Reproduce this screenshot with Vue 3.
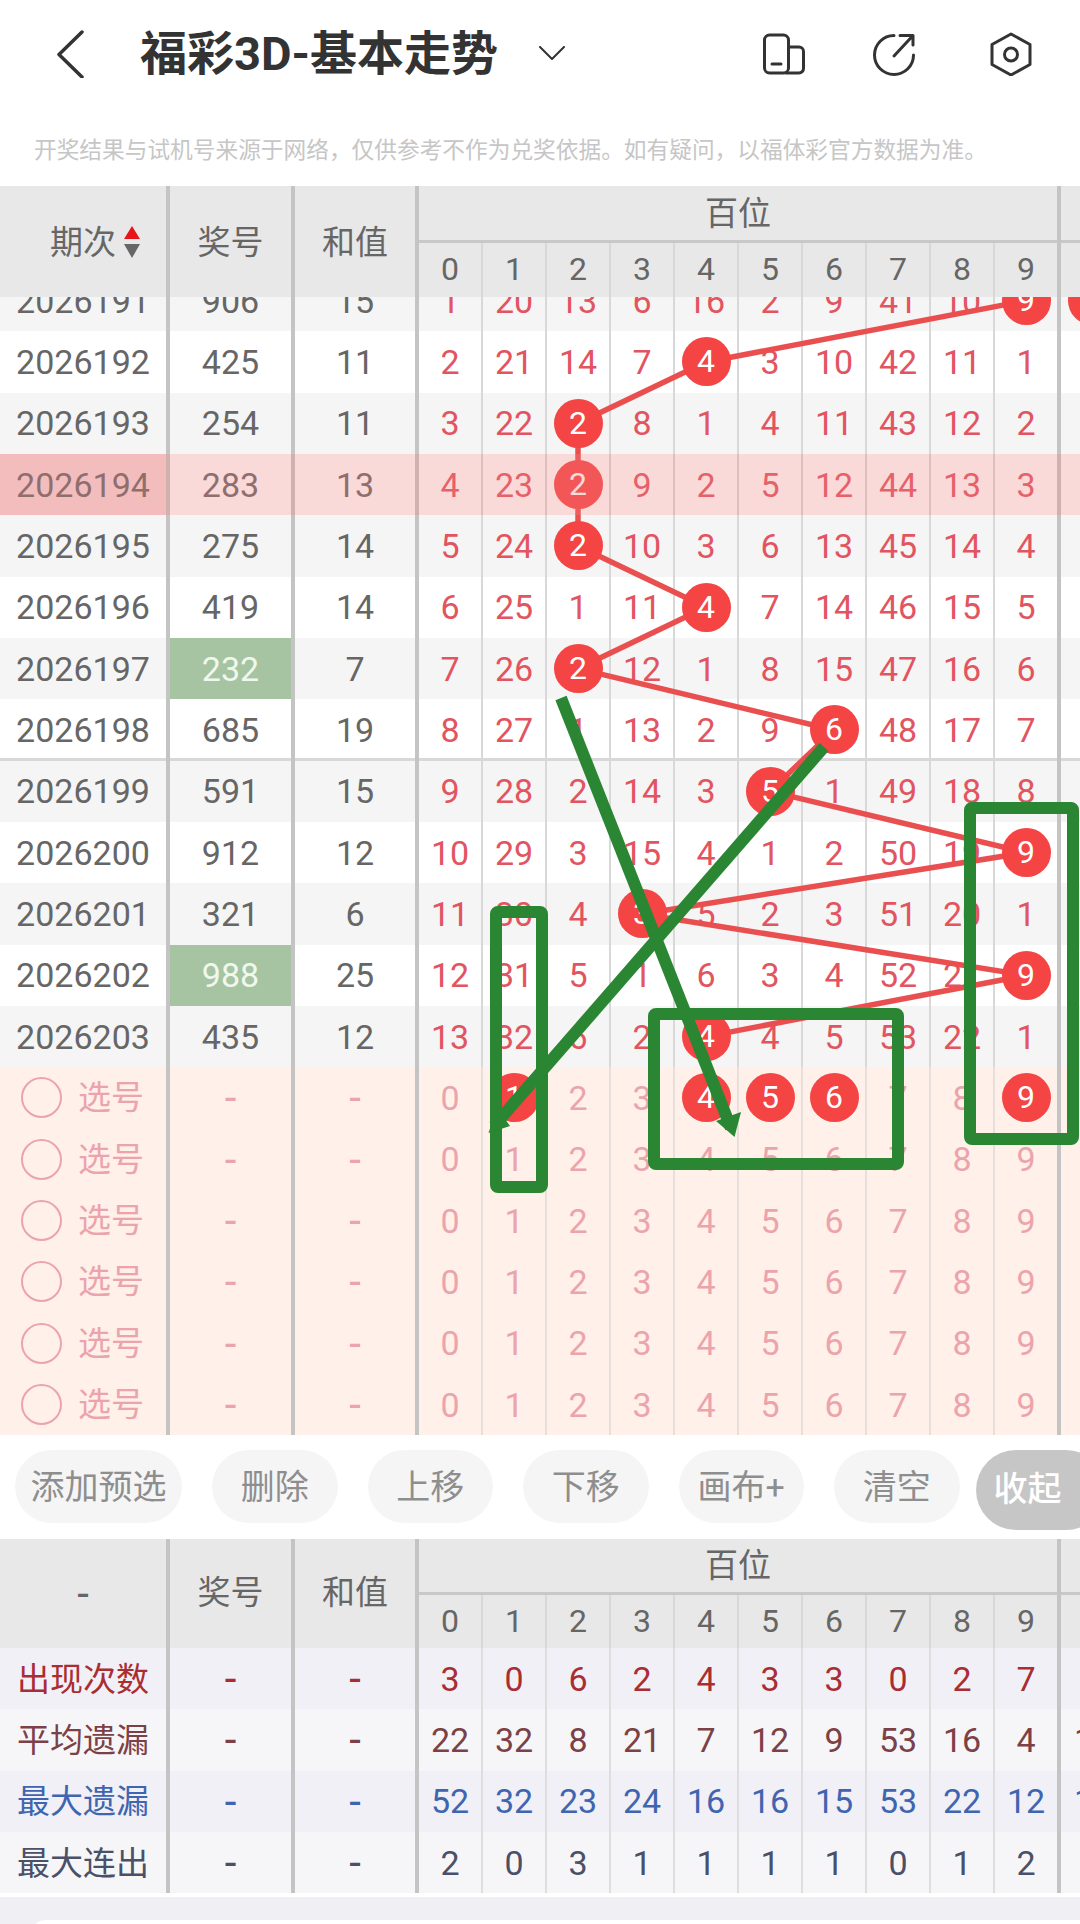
<script setup>
import { computed } from 'vue'

const ROW_H = 61.33
const FIRST_Y = 270
const digits = [0, 1, 2, 3, 4, 5, 6, 7, 8, 9]

const raw = [
  ['2026191', '906', '15', [1, 20, 13, 6, 16, 2, 9, 41, 10, 9, ''], [9, 10], 9],
  ['2026192', '425', '11', [2, 21, 14, 7, 4, 3, 10, 42, 11, 1, ''], [4], 4],
  ['2026193', '254', '11', [3, 22, 2, 8, 1, 4, 11, 43, 12, 2, ''], [2], 2],
  ['2026194', '283', '13', [4, 23, 2, 9, 2, 5, 12, 44, 13, 3, ''], [2], 2],
  ['2026195', '275', '14', [5, 24, 2, 10, 3, 6, 13, 45, 14, 4, ''], [2], 2],
  ['2026196', '419', '14', [6, 25, 1, 11, 4, 7, 14, 46, 15, 5, ''], [4], 4],
  ['2026197', '232', '7', [7, 26, 2, 12, 1, 8, 15, 47, 16, 6, ''], [2], 2],
  ['2026198', '685', '19', [8, 27, 1, 13, 2, 9, 6, 48, 17, 7, ''], [6], 6],
  ['2026199', '591', '15', [9, 28, 2, 14, 3, 5, 1, 49, 18, 8, ''], [5], 5],
  ['2026200', '912', '12', [10, 29, 3, 15, 4, 1, 2, 50, 19, 9, ''], [9], 9],
  ['2026201', '321', '6', [11, 30, 4, 3, 5, 2, 3, 51, 20, 1, ''], [3], 3],
  ['2026202', '988', '25', [12, 31, 5, 1, 6, 3, 4, 52, 21, 9, ''], [9], 9],
  ['2026203', '435', '12', [13, 32, 6, 2, 4, 4, 5, 53, 22, 1, ''], [4], 4]
]

const rows = raw.map(([period, num, sum, cells, balls, hit]) => ({
  period, num, sum, cells, balls, hit,
  odd: Number(period) % 2 === 1,
  green: num === '232' || num === '988',
  hl: period === '2026194',
  sep: period === '2026198'
}))

const picks = [[1, 4, 5, 6, 9], [], [], [], [], []]

const stats = [
  { label: '出现次数', cls: 's-red', vals: [3, 0, 6, 2, 4, 3, 3, 0, 2, 7, 3] },
  { label: '平均遗漏', cls: 's-brown', vals: [22, 32, 8, 21, 7, 12, 9, 53, 16, 4, 13] },
  { label: '最大遗漏', cls: 's-blue', vals: [52, 32, 23, 24, 16, 16, 15, 53, 22, 12, 14] },
  { label: '最大连出', cls: 's-ink', vals: [2, 0, 3, 1, 1, 1, 1, 0, 1, 2, 2] }
]

const tools = ['添加预选', '删除', '上移', '下移', '画布+', '清空']

const trend = computed(() =>
  rows.map((r, i) => `${450 + 64 * r.hit},${(FIRST_Y + ROW_H * (i + 0.5)).toFixed(1)}`).join(' ')
)
</script>

<template>
  <div class="page">
    <header class="bar">
      <svg class="back" viewBox="0 0 28 48" fill="none">
        <path d="M26 2 3 24.500 26 47" />
      </svg>
      <h1 class="title">福彩3D-基本走势</h1>
      <svg class="caret" viewBox="0 0 26 14" fill="none">
        <path d="M1 1 13 13 25 1" />
      </svg>
      <div class="icons">
        <svg class="ic" viewBox="0 0 44 44" fill="none">
          <rect x="2.500" y="3" width="24" height="38" rx="5" />
          <path d="M27 15h10a4.500 4.500 0 0 1 4.500 4.500V36.500a4.500 4.500 0 0 1-4.500 4.500H24" />
          <path d="M10 32h9" />
        </svg>
        <svg class="ic" viewBox="0 0 44 44" fill="none">
          <path d="M41.500 23A19.500 19.500 0 1 1 22 3.500" />
          <path d="M22 24 41 3.500M28 3.500h13V13" />
        </svg>
        <svg class="ic ic-last" viewBox="0 0 44 44" fill="none">
          <polygon points="22,2 41,12.500 41,32.500 22,43 3,32.500 3,12.500" />
          <circle cx="22" cy="22.500" r="6.500" />
        </svg>
      </div>
    </header>

    <p class="notice">开奖结果与试机号来源于网络，仅供参考不作为兑奖依据。如有疑问，以福体彩官方数据为准。</p>

    <section class="head head-top">
      <div class="hc hc-span thick first-sort">
        <span class="sort-text">期次</span>
        <svg class="sort" viewBox="0 0 16 32">
          <polygon points="8,0 16,13 0,13" fill="#e8141c" />
          <polygon points="0,18 16,18 8,32" fill="#666" />
        </svg>
      </div>
      <div class="hc hc-span thick lift">奖号</div>
      <div class="hc hc-span thick lift">和值</div>
      <div class="hc hc-group thick">百位</div>
      <div class="hc hc-next"></div>
      <div v-for="d in digits" :key="d" class="hc hc-digit" :class="d === 9 ? 'thick' : 'thin'">{{ d }}</div>
      <div class="hc hc-digit"></div>
    </section>

    <section class="scroll">
      <div class="rows">
        <div
          v-for="r in rows"
          :key="r.period"
          class="row"
          :class="{ odd: r.odd, sep: r.sep }"
        >
          <div class="c thick" :class="{ 'hl-first': r.hl }">{{ r.period }}</div>
          <div class="c thick" :class="{ green: r.green }">{{ r.num }}</div>
          <div class="c thick">{{ r.sum }}</div>
          <div
            v-for="(v, i) in r.cells"
            :key="i"
            class="c num"
            :class="i === 9 ? 'thick' : 'thin'"
          >
            <span v-if="r.balls.includes(i)" class="ball">{{ v }}</span>
            <template v-else>{{ v }}</template>
          </div>
          <i v-if="r.hl" class="hl"></i>
        </div>

        <div v-for="(p, k) in picks" :key="k" class="row pick">
          <div class="c thick pick-label">
            <span class="radio"></span>
            <span class="pick-text">选号</span>
          </div>
          <div class="c thick dash">-</div>
          <div class="c thick dash">-</div>
          <div v-for="d in digits" :key="d" class="c" :class="d === 9 ? 'thick' : 'thin'">
            <span v-if="p.includes(d)" class="ball">{{ d }}</span>
            <template v-else>{{ d }}</template>
          </div>
          <div class="c"></div>
        </div>
      </div>

      <svg class="trend" viewBox="0 297 1080 1138" fill="none">
        <polyline :points="trend" />
      </svg>

      <svg class="marks" viewBox="0 297 1080 1138" fill="none">
        <rect x="496" y="912" width="46" height="275" rx="2" />
        <rect x="654" y="1014" width="244" height="150" rx="2" />
        <rect x="970" y="808" width="103" height="331" rx="2" />
        <path d="M561 698 731 1128" />
        <polygon class="tip" points="734.500,1137 716,1121 741,1112" />
        <path d="M824 747 494 1126" />
        <polygon class="tip" points="488.500,1133 497,1108 510,1126" />
      </svg>
    </section>

    <nav class="tools">
      <button v-for="t in tools" :key="t" class="tool" :class="{ wide: t.length === 4 }" type="button">{{ t }}</button>
      <button class="tool fold" type="button">收起</button>
    </nav>

    <section class="head head-bottom">
      <div class="hc hc-span thick dash-head">-</div>
      <div class="hc hc-span thick lift">奖号</div>
      <div class="hc hc-span thick lift">和值</div>
      <div class="hc hc-group thick">百位</div>
      <div class="hc hc-next"></div>
      <div v-for="d in digits" :key="d" class="hc hc-digit" :class="d === 9 ? 'thick' : 'thin'">{{ d }}</div>
      <div class="hc hc-digit"></div>
    </section>

    <section class="stats">
      <div v-for="s in stats" :key="s.label" class="row" :class="s.cls">
        <div class="c thick stat-label">{{ s.label }}</div>
        <div class="c thick dash">-</div>
        <div class="c thick dash">-</div>
        <div
          v-for="(v, i) in s.vals"
          :key="i"
          class="c"
          :class="i === 9 ? 'thick' : i < 9 ? 'thin' : ''"
        >{{ v }}</div>
      </div>
    </section>

    <footer class="foot">
      <div class="sheet"></div>
    </footer>
  </div>
</template>

<style scoped>
.page {
  width: 1080px;
  height: 1924px;
  overflow: hidden;
  background: #fff;
  font-family: Roboto, "Noto Sans CJK SC", sans-serif;
  color: #666;
}

.bar {
  height: 108px;
  display: flex;
  align-items: center;
}
.back {
  width: 28px;
  height: 48px;
  margin-left: 56px;
}
.back path {
  stroke: #333;
  stroke-width: 3.500;
  stroke-linecap: round;
  stroke-linejoin: round;
}
.title {
  margin: 0 0 0 56px;
  font-size: 47px;
  line-height: 60px;
  font-weight: 700;
  color: #333;
  white-space: nowrap;
}
.caret {
  width: 26px;
  height: 14px;
  margin-left: 41px;
  margin-top: -2px;
}
.caret path {
  stroke: #333;
  stroke-width: 2;
  stroke-linecap: round;
  stroke-linejoin: round;
}
.icons {
  margin-left: auto;
  margin-right: 47px;
  display: flex;
  gap: 66px;
}
.ic {
  width: 44px;
  height: 44px;
}
.ic * {
  stroke: #333;
  stroke-width: 3;
  stroke-linecap: round;
  stroke-linejoin: round;
}
.ic-last {
  margin-left: 7px;
}

.notice {
  margin: 0;
  height: 78px;
  padding: 8px 0 0 34px;
  box-sizing: border-box;
  font-size: 22.700px;
  line-height: 70px;
  color: #c6c6c6;
  white-space: nowrap;
}

.head {
  display: grid;
  grid-template-columns: 170px 125px 124px repeat(9, 64px) 66px 64px;
  background: #e8e8e8;
  font-size: 33px;
}
.head-top {
  grid-template-rows: 57px 54px;
}
.head-bottom {
  grid-template-rows: 56px 53px;
}
.hc {
  display: flex;
  align-items: center;
  justify-content: center;
  box-sizing: border-box;
}
.hc-span {
  grid-row: span 2;
}
.lift {
  padding-bottom: 7px;
}
.head-top .lift {
  padding-bottom: 3px;
}
.hc-group {
  grid-column: span 10;
  border-bottom: 3px solid #c8c8c8;
  padding-bottom: 5px;
}
.hc-next {
  border-bottom: 3px solid #c8c8c8;
}
.hc-digit {
  font-size: 32px;
  padding-bottom: 2px;
}
.first-sort {
  justify-content: flex-start;
  padding-left: 50px;
  gap: 8px;
}
.sort-text {
  margin-bottom: 4px;
}
.sort {
  width: 16px;
  height: 32px;
}
.dash-head {
  font-size: 42px;
}

.thick {
  border-right: 4px solid #c4c4c4;
}
.thin {
  border-right: 2px solid #d8d8d8;
}

.scroll {
  position: relative;
  height: 1138px;
  overflow: hidden;
  isolation: isolate;
}
.rows {
  margin-top: -27px;
}
.row {
  position: relative;
  display: grid;
  grid-template-columns: 170px 125px 124px repeat(9, 64px) 66px 64px;
  height: 61.330px;
  font-size: 34px;
  background: #fff;
}
.row.odd {
  background: #f5f5f5;
}
.row.sep {
  box-shadow: inset 0 -3px #d8d8d8;
}
.c {
  display: flex;
  align-items: center;
  justify-content: center;
  box-sizing: border-box;
  min-width: 0;
}
.num {
  color: #e2545f;
}
.green {
  background: #a6c4a2;
  color: #f0f8ee;
}
.hl-first {
  background: #f7d7d7;
}
.hl {
  position: absolute;
  inset: 0;
  z-index: 3;
  background: rgba(240, 130, 130, 0.3);
}
.ball {
  position: relative;
  z-index: 2;
  flex: none;
  width: 49px;
  height: 49px;
  border-radius: 50%;
  background: #f44444;
  color: #fff;
  font-size: 32px;
  line-height: 49px;
  text-align: center;
}

.pick {
  background: #fff0ea;
  color: #eca4ac;
}
.pick .thin {
  border-right-color: #e6dfdc;
}
.pick .dash {
  font-size: 42px;
}
.pick-label {
  justify-content: flex-start;
  padding-left: 21px;
  gap: 16px;
  font-size: 33px;
}
.pick-text {
  margin-bottom: 5px;
}
.radio {
  flex: none;
  width: 41px;
  height: 41px;
  box-sizing: border-box;
  border: 2px solid #eca4ac;
  border-radius: 50%;
}

.trend,
.marks {
  position: absolute;
  left: 0;
  top: 0;
  width: 1080px;
  height: 1138px;
}
.trend {
  z-index: 1;
}
.trend polyline {
  stroke: #ea4f50;
  stroke-width: 5.500;
  stroke-linejoin: round;
}
.marks {
  z-index: 4;
}
.marks rect {
  stroke: #2a8632;
  stroke-width: 12;
}
.marks path {
  stroke: #2a8632;
  stroke-width: 12;
}
.marks .tip {
  fill: #2a8632;
}

.tools {
  height: 104px;
  box-sizing: border-box;
  padding: 15px 0 0 15px;
  display: flex;
  align-items: flex-start;
  gap: 30px;
  overflow: hidden;
}
.tool {
  flex: none;
  width: 125.500px;
  height: 73px;
  padding: 0 0 5px;
  border: 0;
  border-radius: 37px;
  background: #f5f5f5;
  color: #8e8e8e;
  font-family: inherit;
  font-size: 34px;
}
.tool.wide {
  width: 167px;
}
.tool.fold {
  width: 130px;
  height: 80px;
  margin-left: -14px;
  padding: 0 0 7px 18px;
  text-align: left;
  border-radius: 40px;
  background: #c6c6c6;
  color: #fff;
  font-weight: 500;
}

.stats .row {
  font-size: 34px;
}
.stats .row .thin {
  border-right-color: #dedede;
}
.stats .row:nth-child(odd) {
  background: #f0f0f6;
}
.stats .row:nth-child(even) {
  background: #f6f6f8;
}
.stats .dash {
  font-size: 42px;
}
.stat-label {
  font-size: 33px;
  padding-bottom: 4px;
}
.s-red {
  color: #a92d33;
}
.s-brown {
  color: #7b4146;
}
.s-blue {
  color: #3f65b0;
}
.s-ink {
  color: #4a5068;
}

.foot {
  margin-top: 4px;
  height: 40px;
  padding: 23px 0 0 30px;
  box-sizing: border-box;
  background: #f0f0f4;
  overflow: hidden;
}
.sheet {
  height: 60px;
  background: #fff;
  border-radius: 16px 0 0 0;
}
</style>
